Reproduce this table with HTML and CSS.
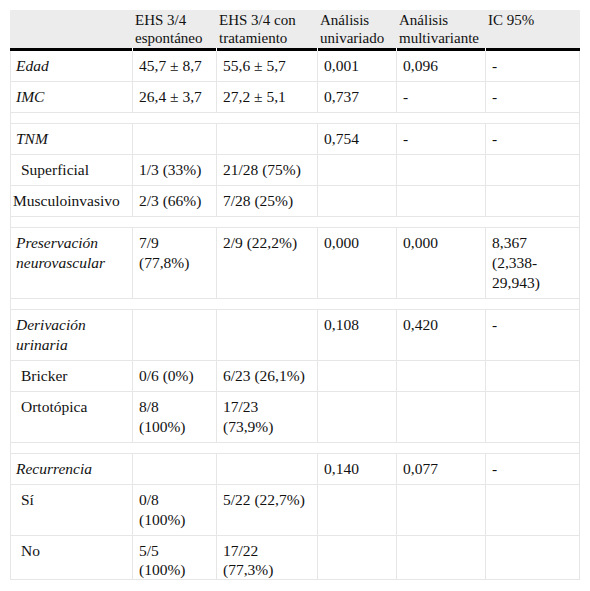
FILE: index.html
```html
<!DOCTYPE html>
<html lang="es">
<head>
<meta charset="utf-8">
<title>Tabla</title>
<link rel="stylesheet" href="styles.css">
</head>
<body>
<table class="data">
  <colgroup>
    <col class="c1"><col class="c2"><col class="c3"><col class="c4"><col class="c5"><col class="c6">
  </colgroup>
  <thead>
    <tr>
      <th></th>
      <th>EHS 3/4 espontáneo</th>
      <th>EHS 3/4 con tratamiento</th>
      <th>Análisis univariado</th>
      <th>Análisis multivariante</th>
      <th>IC 95%</th>
    </tr>
  </thead>
  <tbody>
    <tr><td class="lab">Edad</td><td>45,7 ± 8,7</td><td>55,6 ± 5,7</td><td>0,001</td><td>0,096</td><td>-</td></tr>
    <tr><td class="lab">IMC</td><td>26,4 ± 3,7</td><td>27,2 ± 5,1</td><td>0,737</td><td>-</td><td>-</td></tr>
    <tr class="gap"><td colspan="6"></td></tr>
    <tr><td class="lab">TNM</td><td></td><td></td><td>0,754</td><td>-</td><td>-</td></tr>
    <tr><td class="sub">Superficial</td><td>1/3 (33%)</td><td>21/28 (75%)</td><td></td><td></td><td></td></tr>
    <tr><td class="flush">Musculoinvasivo</td><td>2/3 (66%)</td><td>7/28 (25%)</td><td></td><td></td><td></td></tr>
    <tr class="gap"><td colspan="6"></td></tr>
    <tr><td class="lab">Preservación neurovascular</td><td>7/9<br>(77,8%)</td><td>2/9 (22,2%)</td><td>0,000</td><td>0,000</td><td>8,367<br>(2,338-<br>29,943)</td></tr>
    <tr class="gap"><td colspan="6"></td></tr>
    <tr><td class="lab">Derivación urinaria</td><td></td><td></td><td>0,108</td><td>0,420</td><td>-</td></tr>
    <tr><td class="sub">Bricker</td><td>0/6 (0%)</td><td>6/23 (26,1%)</td><td></td><td></td><td></td></tr>
    <tr><td class="sub">Ortotópica</td><td>8/8<br>(100%)</td><td>17/23<br>(73,9%)</td><td></td><td></td><td></td></tr>
    <tr class="gap"><td colspan="6"></td></tr>
    <tr><td class="lab">Recurrencia</td><td></td><td></td><td>0,140</td><td>0,077</td><td>-</td></tr>
    <tr><td class="sub">Sí</td><td>0/8<br>(100%)</td><td>5/22 (22,7%)</td><td></td><td></td><td></td></tr>
    <tr class="last"><td class="sub">No</td><td>5/5<br>(100%)</td><td>17/22<br>(77,3%)</td><td></td><td></td><td></td></tr>
  </tbody>
</table>
</body>
</html>
```

FILE: styles.css
```css
html, body {
  margin: 0;
  padding: 0;
  background: #fff;
}

body {
  padding: 10px;
  font-family: "Liberation Serif", "Times New Roman", serif;
  font-size: 15px;
  color: #111;
}

.data {
  width: 570px;
  table-layout: fixed;
  border-collapse: separate;
  border-spacing: 0;
}

.c1 { width: 123px; }
.c2 { width: 84px; }
.c3 { width: 101px; }
.c4 { width: 79px; }
.c5 { width: 89px; }
.c6 { width: 94px; }

.data th,
.data td {
  font-family: "Liberation Serif", "Times New Roman", serif;
  color: #111;
}

.data th {
  position: relative;
  background: #ececec;
  font-size: 15px;
  font-weight: normal;
  text-align: left;
  vertical-align: top;
  line-height: 18px;
  padding: 1px 2px 1px 2px;
  border-bottom: 3px solid #000;
}

.data th:not(:last-child)::after {
  content: "";
  position: absolute;
  right: 0;
  bottom: -3px;
  width: 1px;
  height: 3px;
  background: #fff;
}

.data td {
  font-size: 15.5px;
  vertical-align: top;
  text-align: left;
  line-height: 20px;
  padding: 5px 2px 5px 6px;
  border-right: 1px solid #e6e6e6;
  border-bottom: 1px solid #e6e6e6;
}

.data td:first-child {
  border-left: 1px solid #e6e6e6;
}

.data td.lab {
  font-style: italic;
  padding-left: 5px;
}

.data td.sub {
  padding-left: 10px;
}

.data td.flush {
  padding-left: 2px;
}

.data tr.gap td {
  height: 10px;
  padding: 0;
}

.data tr.last td {
  line-height: 19px;
  padding-bottom: 0;
}
```
